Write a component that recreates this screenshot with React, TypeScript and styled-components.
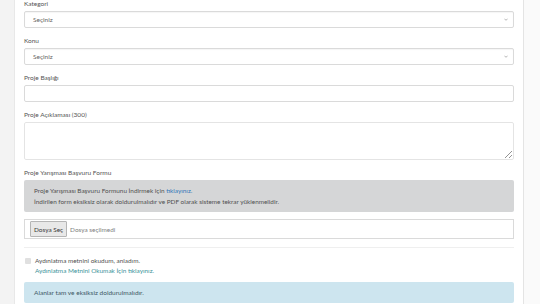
import styled, { createGlobalStyle } from "styled-components";

const GlobalStyle = createGlobalStyle`
  html, body {
    margin: 0;
    padding: 0;
    background: #f4f4f4;
  }
  body {
    font-family: Lato, "Open Sans", "Liberation Sans", sans-serif;
    color: #333;
  }
`;

const Page = styled.div`
  display: flex;
  padding: 0 16px 0 14px;
  height: 304px;
  overflow: hidden;
  background: linear-gradient(to right, #f3f3f3 0, #f3f3f3 50%, #fafafa 50%);
`;

const Card = styled.div`
  flex: 1;
  background: #fff;
  border-left: 1px solid #e8e8e8;
  border-right: 1px solid #e4e4e4;
  padding: 0 9px 0 9px;
`;

const Field = styled.div`
  margin-bottom: 9px;
`;

const Label = styled.div`
  font-size: 6.5px;
  height: 8px;
  line-height: 8px;
  margin-bottom: 3px;
  color: #555;
`;

const Select = styled.div`
  display: flex;
  align-items: center;
  justify-content: space-between;
  height: 17px;
  box-sizing: border-box;
  border: 1px solid #dadada;
  border-radius: 2px;
  padding: 0 5px 0 8px;
  font-size: 6.5px;
  color: #666;
  box-shadow: inset 0 1px 1px rgba(0, 0, 0, 0.04);
`;

const Input = styled.div`
  height: 17px;
  box-sizing: border-box;
  border: 1px solid #dadada;
  border-radius: 2px;
`;

const TextArea = styled.textarea`
  display: block;
  width: 100%;
  height: 38px;
  box-sizing: border-box;
  border: 1px solid #dadada;
  border-radius: 2px;
  margin: 0;
  padding: 0;
  opacity: 0.7;
`;

const Well = styled.div`
  background: #d5d6d7;
  border-radius: 2px;
  padding: 5px 10px;
  font-size: 6.4px;
  line-height: 11px;
  color: #505050;
`;

const Link = styled.a<{ $tone?: "blue" | "teal" }>`
  color: ${(p) => (p.$tone === "teal" ? "#3a929a" : "#3176b8")};
  text-decoration: none;
`;

const FileBox = styled.div`
  display: flex;
  align-items: center;
  gap: 3px;
  margin-top: 7px;
  height: 20px;
  box-sizing: border-box;
  border: 1px solid #dadada;
  padding: 0 5px;
  font-size: 6.4px;
`;

const FileButton = styled.span`
  display: inline-flex;
  align-items: center;
  height: 14px;
  padding: 0 3px;
  background: #e8e8e8;
  border: 1px solid #b5b5b5;
  border-radius: 1px;
  color: #3a3a3a;
`;

const FileName = styled.span`
  color: #808080;
`;

const Divider = styled.div`
  height: 1px;
  background: #efefef;
  margin: 8px 0 8px;
`;

const ConsentRow = styled.div`
  display: flex;
  gap: 4px;
  padding-left: 1px;
  font-size: 6.4px;
  line-height: 10px;
  color: #505050;
`;

const Box = styled.span`
  width: 6px;
  height: 6px;
  margin-top: 2px;
  background: #e0e0e0;
  border-radius: 1px;
`;

const Alert = styled.div`
  margin-top: 6px;
  height: 21px;
  box-sizing: border-box;
  background: #cde5ef;
  border-radius: 2px;
  padding: 0 10px;
  display: flex;
  align-items: center;
  font-size: 6.5px;
  color: #3d5966;
`;

const Chevron = () => (
  <svg width="4" height="3" viewBox="0 0 10 6">
    <path d="M1 1l4 4 4-4" fill="none" stroke="#999" strokeWidth="1.8" />
  </svg>
);

export default () => {
  return (
    <>
      <GlobalStyle />
      <Page>
        <Card>
          {/* Kategori */}
          <Field>
            <Label>Kategori</Label>
            <Select>
              <span>Seçiniz</span>
              <Chevron />
            </Select>
          </Field>
          {/* Konu */}
          <Field>
            <Label>Konu</Label>
            <Select>
              <span>Seçiniz</span>
              <Chevron />
            </Select>
          </Field>
          <Field>
            <Label>Proje Başlığı</Label>
            <Input />
          </Field>
          <Field>
            <Label>Proje Açıklaması (300)</Label>
            <TextArea />
          </Field>
          <Label>Proje Yarışması Başvuru Formu</Label>
          <Well>
            Proje Yarışması Başvuru Formunu İndirmek için <Link $tone="blue">tıklayınız.</Link>
            <br />
            İndirilen form eksiksiz olarak doldurulmalıdır ve PDF olarak sisteme tekrar yüklenmelidir.
          </Well>
          <FileBox>
            <FileButton>Dosya Seç</FileButton>
            <FileName>Dosya seçilmedi</FileName>
          </FileBox>
          <Divider />
          <ConsentRow>
            <Box />
            <div>
              Aydınlatma metnini okudum, anladım.
              <br />
              <Link $tone="teal">Aydınlatma Metnini Okumak İçin tıklayınız.</Link>
            </div>
          </ConsentRow>
          <Alert>Alanlar tam ve eksiksiz doldurulmalıdır.</Alert>
        </Card>
      </Page>
    </>
  );
};
